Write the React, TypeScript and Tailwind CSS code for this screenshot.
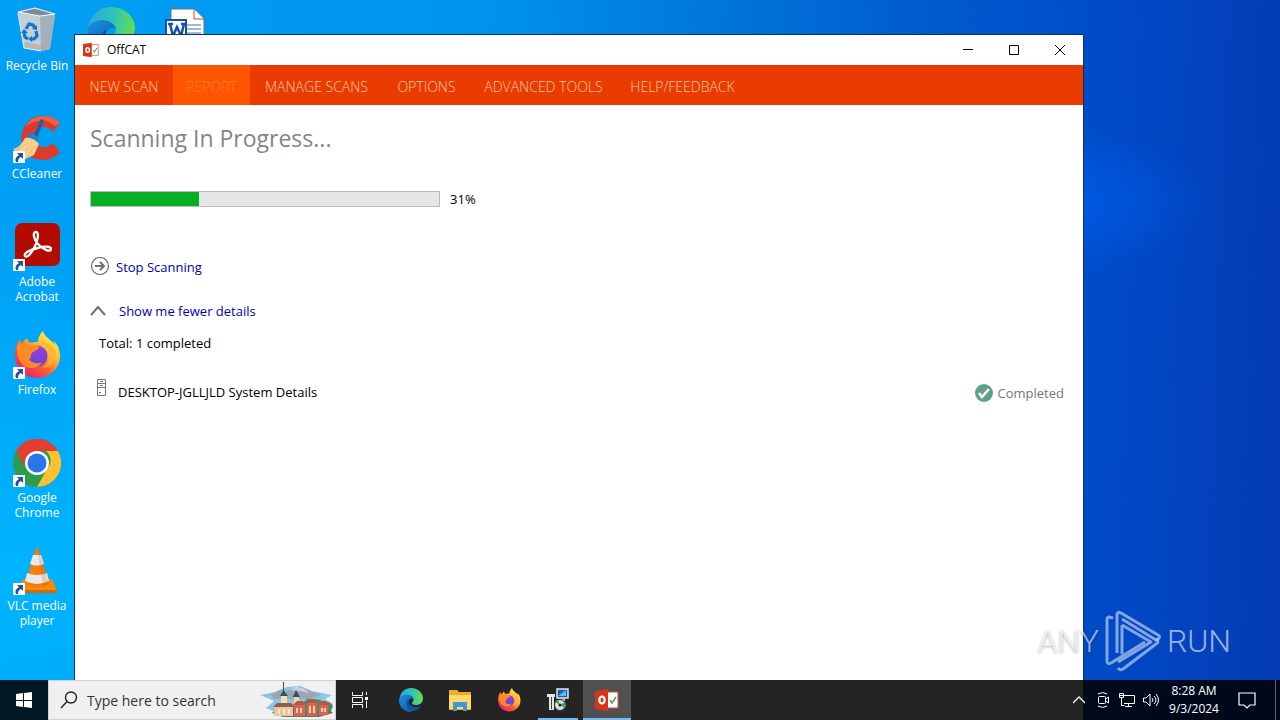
import React from 'react';

interface DesktopItem {
  label: string;
  icon: React.ReactNode;
  shortcut?: boolean;
}

const EdgeIcon = ({ className, id }: { className: string; id: string }) => (
  <svg className={className} viewBox="0 0 48 48">
    <defs>
      <linearGradient id={`${id}-top`} x1="0" y1="0.4" x2="1" y2="0.5">
        <stop offset="0" stopColor="#2aa9df" />
        <stop offset="0.5" stopColor="#2fc3b8" />
        <stop offset="1" stopColor="#62dc55" />
      </linearGradient>
      <linearGradient id={`${id}-mid`} x1="0" y1="0" x2="0.8" y2="1">
        <stop offset="0" stopColor="#1a93dd" />
        <stop offset="1" stopColor="#0b5cb5" />
      </linearGradient>
    </defs>
    <path d="M1 22C2 9 12 0 24 0c13 0 24 9 24 21 0 8-6 13-14 13-6 0-8-2-8-4s3-3 3-7c0-5-5-9-12-9C8 14 3 18 1 22z" fill={`url(#${id}-top)`} />
    <path d="M0 24c1-6 7-11 15-11 7 0 13 4 14 9-3-2-7-1-9 2-4 6 0 16 9 20-2 2-5 4-8 4C8 46 0 36 0 24z" fill={`url(#${id}-mid)`} />
    <path d="M19 22c-6 4-6 14 0 20 6 6 16 6 24-5 1-1 0-2-1-1-7 4-17 2-21-4-2-3-3-7-2-10z" fill="#134f9b" />
  </svg>
);

const FirefoxIcon = ({ className, id }: { className: string; id: string }) => (
  <svg className={className} viewBox="0 0 48 48">
    <defs>
      <linearGradient id={`${id}-fire`} x1="0.85" y1="0.1" x2="0.2" y2="0.95">
        <stop offset="0" stopColor="#fff04a" />
        <stop offset="0.35" stopColor="#ffb52e" />
        <stop offset="0.65" stopColor="#ff5a36" />
        <stop offset="1" stopColor="#e81f78" />
      </linearGradient>
      <linearGradient id={`${id}-globe`} x1="0.5" y1="0" x2="0.4" y2="1">
        <stop offset="0" stopColor="#a340d6" />
        <stop offset="1" stopColor="#5746d8" />
      </linearGradient>
    </defs>
    <path d="M30 0c-4 4-5 8-5 11-3 0-5 0-7 1-2-1-4-3-4-5-3 2-4 4-4 6-2-1-3-3-3-5-3 4-5 9-5 16 0 13 10 23 22 23s23-9 23-22c0-7-3-12-6-15 0 2 1 3 1 4C39 9 32 7 30 0z" fill={`url(#${id}-fire)`} />
    <circle cx="24" cy="25" r="10.500" fill={`url(#${id}-globe)`} />
    <path d="M4 15c3-3 9-3 13-1 3 0 7 0 9 2 0 3-6 4-7 6-2 2 0 5-3 6 3 5 9 5 13 3-3 7-17 9-22-1-3-5-3-9-3-15z" fill="#ff8a24" />
    <path d="M28 12c5 2 8 6 8 13s-3 10-7 12c9-1 15-6 14-15-1-6-7-11-15-10z" fill="#ffb23a" opacity="0.750" />
  </svg>
);

const OffCatIcon = ({ className }: { className: string }) => (
  <svg className={className} viewBox="0 0 24 22">
    <path d="M12 3h11v16H12z" fill="#fff" stroke="#d9512f" strokeWidth="1" />
    <path d="M0 2l13-2v22L0 20z" fill="#d5351b" />
    <ellipse cx="7" cy="11" rx="2.600" ry="3.500" fill="none" stroke="#fff" strokeWidth="2.200" />
    <path d="M15 11l2 3 4-6" fill="none" stroke="#629c66" strokeWidth="1.600" />
  </svg>
);

const RecycleBinIcon = () => (
  <svg className="h-12 w-12" viewBox="0 0 48 48">
    <path d="M5 5l37 2-5 35-9 2-17-3z" fill="#c2cfd9" />
    <path d="M27 9l15-2-5 35-9 2z" fill="#a3b0bc" />
    <path d="M5 5l17-4 20 6-15 2z" fill="#7e8c98" stroke="#eef5f9" strokeWidth="1.200" />
    <path d="M12 35l16 3 9-2-1 6-8 2-17-3z" fill="#b5aba8" opacity="0.700" />
    <path d="M5 6l6 35 17 3" fill="none" stroke="#e5eef3" />
    <g fill="none" stroke="#1476cb" strokeWidth="3.200">
      <path d="M13 22l3-5 4 1 2 3" />
      <path d="M23 24l1 5-3 3h-3" />
      <path d="M15 32l-3-2-1-5" />
    </g>
    <path d="M19 22l5 1 0-5zM19 29l-4 3 4 3zM8 26l3-4 4 4z" fill="#1476cb" />
  </svg>
);

const WordIcon = () => (
  <svg className="h-12 w-12" viewBox="0 0 48 48">
    <path d="M10 2h23l10 10v34H10z" fill="#fff" stroke="#65737e" />
    <path d="M33 2v10h10" fill="#fff" stroke="#b44a32" />
    <path d="M26 18h14M26 22h14M26 26h14" stroke="#3674b8" />
    <path d="M5 13h20v21H5z" fill="#fff" stroke="#1a4eac" strokeWidth="2" />
    <path d="M9 17l3 12 4-9 4 9 3-12M7 17h5M20 17h5" fill="none" stroke="#164eb0" strokeWidth="2.500" />
  </svg>
);

const CCleanerIcon = () => (
  <svg className="h-12 w-12" viewBox="0 0 48 48">
    <path d="M47 8C37-3 16-2 10 15c-6 17 5 30 19 30 8 0 14-3 18-8l-7-9c-6 7-18 5-19-5-1-11 13-15 19-6z" fill="#dd3a2d" />
    <path d="M47 8C38-2 20-2 12 12c10-8 22-9 30-1z" fill="#ee6048" />
    <path d="M28 4l3 1-8 21-6-3 5-6z" fill="#1763a4" />
    <path d="M14 20c4-3 10-1 12 5l-2 5-11-5z" fill="#2682c7" />
    <path d="M12 23c5-1 11 2 14 6l-5 11-11 5L0 34c5-1 9-5 12-11z" fill="#f5d08e" />
    <path d="M3 35l12-7M8 40l10-10M14 43l7-12" stroke="#e6b96d" />
  </svg>
);

const AcrobatIcon = () => (
  <svg className="h-12 w-12" viewBox="0 0 48 48">
    <rect x="2" y="0" width="45" height="43" rx="7" fill="#b30b00" />
    <path d="M12 33c-2-3 7-7 13-8 6-2 13-2 13 1 0 4-9 0-13-5-4-4-6-12-2-12 4 0 1 11-2 16-3 6-7 10-9 8z" fill="none" stroke="#fff" strokeWidth="2.300" />
  </svg>
);

const ChromeIcon = () => (
  <svg className="h-12 w-12" viewBox="0 0 48 48">
    <circle cx="24" cy="24" r="24" fill="#2d9b4b" />
    <path d="M3 12a24 24 0 0 1 42 0H24a12 12 0 0 0-11 17z" fill="#e33e32" />
    <path d="M45 12a24 24 0 0 1-21 36l10-18a12 12 0 0 0-1-18z" fill="#fbc12f" />
    <circle cx="24" cy="24" r="12" fill="#fff" />
    <circle cx="24" cy="24" r="9.500" fill="#2876e8" />
  </svg>
);

const VlcIcon = () => (
  <svg className="h-12 w-12" viewBox="0 0 48 48">
    <path d="M10 32h29l5 12H5z" fill="#f58a0b" />
    <path d="M5 43h39v3H5z" fill="#d96800" />
    <path d="M23 1q1-1 2 0l11 36q-12 7-24 0z" fill="#f47d10" />
    <path d="M20 8h8l3 9q-7 3-14 0zM14 26q10 4 20 0l2 8q-12 6-24 0z" fill="#e9e9e7" />
    <path d="M25 1l11 36-6 3-6-39z" fill="#c95507" opacity="0.200" />
  </svg>
);

const desktopColumns: DesktopItem[][] = [
  [
    { label: 'Recycle Bin', icon: <RecycleBinIcon /> },
    { label: 'CCleaner', icon: <CCleanerIcon />, shortcut: true },
    { label: 'Adobe Acrobat', icon: <AcrobatIcon />, shortcut: true },
    { label: 'Firefox', icon: <FirefoxIcon className="h-12 w-12" id="ff-desk" />, shortcut: true },
    { label: 'Google Chrome', icon: <ChromeIcon />, shortcut: true },
    { label: 'VLC media player', icon: <VlcIcon />, shortcut: true },
  ],
  [{ label: '', icon: <EdgeIcon className="h-12 w-12" id="edge-desk" /> }],
  [{ label: '', icon: <WordIcon /> }],
];

const menuItems = [
  { label: 'NEW SCAN', className: 'w-[98px] text-[#ffc9a8]' },
  { label: 'REPORT', className: 'w-[77px] bg-[#ff5500] text-[#ff7a2e]' },
  { label: 'MANAGE SCANS', className: 'w-[133px] text-[#ffc9a8]' },
  { label: 'OPTIONS', className: 'w-[87px] text-[#ffc9a8]' },
  { label: 'ADVANCED TOOLS', className: 'w-[147px] text-[#ffc9a8]' },
  { label: 'HELP/FEEDBACK', className: 'w-[131px] text-[#ffc9a8]' },
];

function ShortcutArrow() {
  return (
    <svg className="absolute bottom-0 left-0 h-3 w-3" viewBox="0 0 12 12">
      <path d="M0 0h12v12H0z" fill="#fff" />
      <path d="M4 2h6v6L8 6Q5 7 5 11H3Q1 7 6 4z" fill="#24529a" />
    </svg>
  );
}

function DesktopIcons() {
  return (
    <div className="flex">
      {desktopColumns.map((column, i) => (
        <div key={i} className="flex w-[74px] flex-col">
          {column.map((item, j) => (
            <button key={j} aria-label={item.label || 'Desktop shortcut'} className="flex h-[108px] flex-col items-center gap-[3px] pt-[7px]">
              <span className="relative">
                {item.icon}
                {item.shortcut && <ShortcutArrow />}
              </span>
              <span className="w-[66px] text-center text-[12px] leading-[15px] text-white">{item.label}</span>
            </button>
          ))}
        </div>
      ))}
    </div>
  );
}

function TitleBar() {
  return (
    <header className="flex h-[30px] items-center pl-2">
      <OffCatIcon className="h-4 w-4" />
      <h1 className="ml-2 flex-1 text-[12px] leading-4 text-black">OffCAT</h1>
      <button aria-label="Minimize" className="flex h-full w-[46px] items-center justify-center">
        <svg className="h-[10px] w-[10px]" viewBox="0 0 10 10" stroke="#000"><path d="M0 4.500h10" /></svg>
      </button>
      <button aria-label="Maximize" className="flex h-full w-[46px] items-center justify-center">
        <svg className="h-[10px] w-[10px]" viewBox="0 0 10 10" stroke="#000" fill="none"><path d="M.5.5h9v9h-9z" /></svg>
      </button>
      <button aria-label="Close" className="flex h-full w-[46px] items-center justify-center">
        <svg className="h-[10px] w-[10px]" viewBox="0 0 10 10" stroke="#000"><path d="M0 0l10 10M10 0L0 10" /></svg>
      </button>
    </header>
  );
}

function OffCatWindow() {
  const progress = 31;

  return (
    <main className="absolute top-[34px] right-[196px] bottom-0 left-[74px] border-x border-t border-[#123358] bg-white">
      <TitleBar />
      <nav className="flex h-10 bg-[#eb3c00]">
        {menuItems.map((item) => (
          <button key={item.label} className={`${item.className} h-full pt-[2px] text-center text-[14px] font-light whitespace-nowrap`}>
            {item.label}
          </button>
        ))}
      </nav>

      <div className="flex flex-col items-start px-[15px] pt-[17px] text-[13px] leading-5 text-black">
        <h2 className="text-[23px] leading-8 text-[#858585]">Scanning In Progress...</h2>

        <div className="mt-[35px] flex items-center gap-[10px]">
          <div role="progressbar" aria-label="Scan progress" aria-valuenow={progress} className="h-4 w-[350px] border border-[#bcbcbc] bg-[#e6e6e6]">
            <div className="h-full bg-[#06b025]" style={{ width: `${progress}%` }} />
          </div>
          <span>{progress}%</span>
        </div>

        <button className="mt-[48px] flex items-center gap-[6px] text-[#0000b4]">
          <svg className="h-5 w-5" viewBox="0 0 20 20" fill="none" stroke="#707070">
            <circle cx="10" cy="9" r="8.500" strokeWidth="1.200" />
            <path d="M5 9h9M10 5l4 4-4 4" strokeWidth="2" />
          </svg>
          Stop Scanning
        </button>

        <button className="mt-6 flex items-center gap-[13px] text-[#0000b4]">
          <svg className="h-4 w-4" viewBox="0 0 16 16" fill="none" stroke="#707070" strokeWidth="2"><path d="M1 12l7-8 7 8" /></svg>
          Show me fewer details
        </button>

        <p className="mt-3 pl-[9px]">Total: 1 completed</p>

        <ul className="mt-[26px] w-full">
          <li className="flex items-center justify-between pr-1 pl-[7px]">
            <span className="flex items-center gap-3 pb-[3px]">
              <svg className="mb-2 h-[17px] w-[9px]" viewBox="0 0 9 17" fill="none" stroke="#777">
                <path d="M.5.5h8v16h-8zM0 4.500h9M0 8.500h9M3 2.500h3M3 6.500h3M2 13.500h2" />
              </svg>
              DESKTOP-JGLLJLD System Details
            </span>
            <span className="flex items-center gap-[5px] text-[#777]">
              <svg className="h-[18px] w-[18px]" viewBox="0 0 18 18" fill="none">
                <circle cx="9" cy="9" r="9" fill="#609f8a" />
                <path d="M4 9l3 4 7-8" stroke="#fff" strokeWidth="2.500" />
              </svg>
              Completed
            </span>
          </li>
        </ul>
      </div>
    </main>
  );
}

function Watermark() {
  return (
    <div className="pointer-events-none absolute right-[49px] bottom-[48px] flex h-[62px] items-center gap-[6px] font-['Roboto','Open_Sans',sans-serif] text-[32px] leading-none font-light text-white/60">
      <span className="w-[66px] text-right [text-shadow:0_1px_3px_#00000055]">ANY</span>
      <svg className="h-[62px] w-[56px]" viewBox="0 0 56 62" fill="none" stroke="#b8cdf2" strokeOpacity="0.700" strokeWidth="3" strokeLinejoin="round">
        <path d="M8 8l-4-1q-2 0-2 3v41q0 4 4 2l34-21" />
        <path d="M12 43V5q0-4 4-2l37 22q3 2 0 4l-2 1-34-21" />
        <path d="M17 15v29M17 15l29 17-33 20M51 29q4 3 0 5L18 59q-3 2-5-1" />
      </svg>
      <span>RUN</span>
    </div>
  );
}

function SearchArt() {
  return (
    <svg className="h-9 w-[76px]" viewBox="0 0 76 36">
      <path d="M1 13l15-3 12-5 12-1 13 5 20 4-7 4 8 5-9 9-18 4-24-2-16-7 8-7z" fill="#8cc6e2" />
      <path d="M11 13l12-6 5 2 13-5 13 6 9 3-12 4H16z" fill="#9aa5b8" />
      <path d="M31 8l7-4 8 3 4 4-9-2z" fill="#ccd0dc" />
      <path d="M17 27q21-7 53 0l4 4-14 4H24l-11-4z" fill="#65716a" />
      <path d="M45 20q4-6 9-1 5-4 10 1 7-1 10 4l-2 5H45z" fill="#438f55" />
      <path d="M22 14h6v19h-6z" fill="#f4dfb0" />
      <path d="M35 15h5v17h-5z" fill="#efd6a0" />
      <path d="M21 14l3-5V0h1v9l4 5zM34 15l3-7 4 7z" fill="#294f69" />
      <path d="M15 25h19v9H15z" fill="#e9c69b" />
      <path d="M14 25l4-4h14l4 4z" fill="#8c5e50" />
      <path d="M35 23h11v11H35zM48 21h10v13H48zM60 23h9v10h-9z" fill="#d8644f" />
      <path d="M34 23l4-4h6l3 4zM47 21l4-4h5l3 4zM59 23l3-4h5l4 4z" fill="#b95346" />
      <path d="M38 26v5M42 26v5M51 24v7M55 24v7M63 26v4M66 26v4M20 27v5M25 27v5M30 27v5" stroke="#fff0d6" strokeWidth="1.500" />
    </svg>
  );
}

function Taskbar() {
  return (
    <footer className="relative mt-auto flex h-10 items-center bg-black/86 text-white">
      <button aria-label="Start" className="flex h-full w-12 items-center justify-center">
        <svg className="h-4 w-4" viewBox="0 0 16 16" fill="#fff"><path d="M0 2l7-1v7H0zM8 1l8-1v8H8zM0 9h7v6l-7-1zM8 9h8v7l-8-1z" /></svg>
      </button>
      <label className="flex h-full w-[288px] items-center border border-[#d0d0d0] bg-[#f0f0f0] pl-[11px]">
        <svg className="h-[18px] w-[18px] shrink-0" viewBox="0 0 18 18" fill="none" stroke="#222" strokeWidth="1.400">
          <circle cx="11" cy="6.500" r="5.500" /><path d="M7 10.500L1 17" />
        </svg>
        <input aria-label="Type here to search" placeholder="Type here to search" className="ml-[9px] w-0 flex-1 bg-transparent text-[14px] text-black outline-none placeholder:text-[#333]" />
        <SearchArt />
      </label>
      <button aria-label="Task View" className="flex h-full w-12 items-center justify-center">
        <svg className="h-4 w-4" viewBox="0 0 16 16" fill="none" stroke="#fff">
          <path d="M.5 0v3.500h10V0M.5 16v-3.500h10V16M.5 5.500h10v5H.5zM14.500 0v3M14.500 9v7" /><path d="M13 5h3v3h-3z" fill="#fff" stroke="none" />
        </svg>
      </button>
      <div className="ml-[3px] flex h-full gap-px">
        <button aria-label="Microsoft Edge" className="flex w-12 items-center justify-center"><EdgeIcon className="h-6 w-6" id="edge-bar" /></button>
        <button aria-label="File Explorer" className="flex w-12 items-center justify-center">
          <svg className="h-6 w-6" viewBox="0 0 24 24">
            <path d="M1 2h8l2 2h12v18H1z" fill="#e9ad28" /><path d="M1 7h22v14H1z" fill="#ffd868" /><path d="M5 14h14v9h-4v-4H9v4H5z" fill="#3f98db" />
          </svg>
        </button>
        <button aria-label="Firefox" className="flex w-12 items-center justify-center"><FirefoxIcon className="h-6 w-6" id="ff-bar" /></button>
        <button aria-label="Installer" className="mx-1 flex w-10 items-center justify-center border-b-2 border-[#76b9ed] pt-[2px]">
          <svg className="h-6 w-6" viewBox="0 0 24 24">
            <path d="M11 1h11v9H11z" fill="#1263b0" stroke="#e5e5e5" strokeWidth="1.500" />
            <path d="M12 8l8-6v6z" fill="#61b5f2" />
            <path d="M15 10h4v3h-4z" fill="#bbb" />
            <path d="M1 6h8v3H8v13H3V9H1z" fill="#e4e4e4" />
            <path d="M5.500 9v12" stroke="#444" />
            <circle cx="14" cy="17" r="5.500" fill="#d5ddd5" stroke="#333" />
            <path d="M14 17l5-3a6 6 0 0 1 0 6zM14 17l-5-3 3-2z" fill="#4c9c62" />
            <circle cx="14" cy="17" r="1.500" fill="#222" />
          </svg>
        </button>
        <button aria-label="OffCAT" className="flex w-12 items-center justify-center border-b-2 border-[#76b9ed] bg-[#505050] pt-[2px]"><OffCatIcon className="h-6 w-6" /></button>
      </div>

      <div className="ml-auto flex h-full items-center">
        <button aria-label="Show hidden icons" className="flex w-6 justify-center">
          <svg className="h-3 w-3" viewBox="0 0 12 12" fill="none" stroke="#fff" strokeWidth="1.300"><path d="M0 9l6-6 6 6" /></svg>
        </button>
        <button aria-label="Meet Now" className="flex w-6 justify-center">
          <svg className="h-4 w-4" viewBox="0 0 16 16" fill="none" stroke="#fff"><rect x="3.500" y="4.500" width="7" height="7" rx="1" /><path d="M10.500 7l3-2v6l-3-2M3 2q5-3 9 0M3 14q5 3 9 0" /></svg>
        </button>
        <button aria-label="Network" className="flex w-6 justify-center">
          <svg className="h-4 w-4" viewBox="0 0 16 16" fill="none" stroke="#fff"><path d="M5 3.500h10.500v8H5M9.500 12v2.500M6 14.500h7M.5 1.500h4v4h-4zM2.500 5.500v8h3M1 3.500h3" /></svg>
        </button>
        <button aria-label="Volume" className="flex w-6 justify-center">
          <svg className="h-4 w-4" viewBox="0 0 16 16" fill="none" stroke="#fff"><path d="M.5 6h2.500l4-4v12l-4-4H.5zM9 6q2 2 0 4M11 4q4 4 0 8M13 2q5 6 0 12" /></svg>
        </button>
        <time className="w-[62px] text-center text-[12px] leading-[18px]">8:28 AM<br />9/3/2024</time>
        <button aria-label="Notifications" className="flex w-11 justify-center">
          <svg className="h-[18px] w-[18px]" viewBox="0 0 18 18" fill="none" stroke="#fff" strokeWidth="1.200"><path d="M1 2h16v12h-5l-3 3-3-3H1z" /></svg>
        </button>
        <button aria-label="Show desktop" className="ml-[6px] h-full w-[5px] border-l border-[#596273]" />
      </div>
    </footer>
  );
}

export default function App() {
  return (
    <div className="relative flex min-h-screen flex-col overflow-hidden bg-[radial-gradient(ellipse_at_83%_28%,#0060f0b0_0%,#0060f000_10%),radial-gradient(ellipse_at_0%_80%,#00b4ff_0%,#00b4ff00_45%),linear-gradient(92deg,#00a0f4_0%,#0094ec_37%,#0060d0_68%,#004bc8_85%,#043bb3_100%)] font-['Open_Sans','Noto_Sans',sans-serif]">
      <DesktopIcons />
      <OffCatWindow />
      <Watermark />
      <Taskbar />
    </div>
  );
}
